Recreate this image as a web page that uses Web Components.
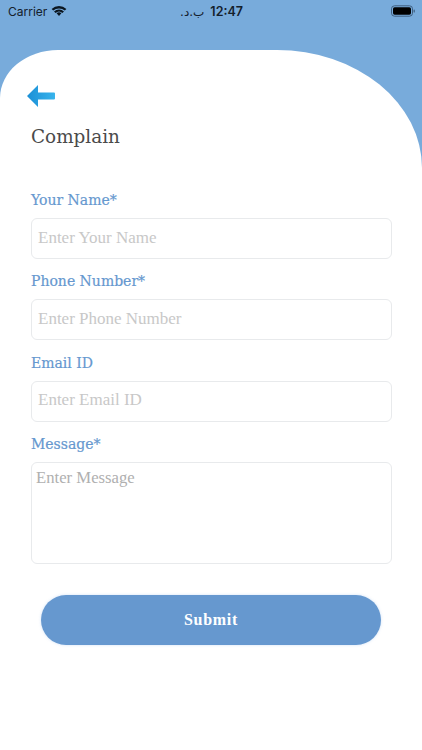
<!DOCTYPE html>
<html>
<head>
<meta charset="utf-8">
<title>Complain</title>
<style>
  html, body { margin: 0; padding: 0; background: #fff; }
</style>
</head>
<body>

<complain-screen>
  <status-bar slot="top"></status-bar>
  <back-arrow></back-arrow>
  <page-title>Complain</page-title>
  <form-field label="Your Name*">Enter Your Name</form-field>
  <form-field label="Phone Number*">Enter Phone Number</form-field>
  <form-field label="Email ID">Enter Email ID</form-field>
  <form-field label="Message*" multiline>Enter Message</form-field>
  <submit-button>Submit</submit-button>
</complain-screen>

<script>
class ComplainScreen extends HTMLElement {
  constructor() {
    super();
    this.attachShadow({ mode: 'open' });
    this.shadowRoot.innerHTML = `
      <style>
        :host {
          display: flex;
          flex-direction: column;
          width: 422px;
          height: 750px;
          overflow: hidden;
          background: #78abdb;
        }
        .sheet {
          flex: 1;
          display: flex;
          flex-direction: column;
          background: #fff;
          border-radius: 58px 145px 0 0 / 48px 118px 0 0;
          padding: 34px 30.5px 0;
        }
      </style>
      <slot name="top"></slot>
      <div class="sheet"><slot></slot></div>
    `;
  }
}

class StatusBar extends HTMLElement {
  constructor() {
    super();
    this.attachShadow({ mode: 'open' });
    this.shadowRoot.innerHTML = `
      <style>
        :host {
          display: grid;
          grid-template-columns: 1fr auto 1fr;
          align-items: center;
          height: 50px;
          padding: 0 7px 28px 8px;
          box-sizing: border-box;
          font: 12px "Inter", "Liberation Sans", sans-serif;
          color: #14202c;
        }
        .left { display: flex; align-items: center; gap: 4px; }
        .time { font-weight: 600; font-size: 12.5px; }
        .pm { font: 12px "DejaVu Sans", sans-serif; margin-right: 6px; letter-spacing: .4px; }
        .right { justify-self: end; display: flex; }
      </style>
      <div class="left">
        <span>Carrier</span>
        <svg width="16" height="12" viewBox="0 0 16 12">
          <path d="M8 11 L5.6 8.2 A3.7 3.7 0 0 1 10.4 8.2 Z" fill="#0b1620"/>
          <path d="M8 1 A11 11 0 0 0 .6 3.9 L2.2 5.6 A8.7 8.7 0 0 1 13.8 5.6 L15.4 3.9 A11 11 0 0 0 8 1 Z" fill="#0b1620"/>
          <path d="M8 4.4 A7.3 7.3 0 0 0 3 6.4 L4.6 8.1 A5 5 0 0 1 11.4 8.1 L13 6.4 A7.3 7.3 0 0 0 8 4.4 Z" fill="#0b1620"/>
        </svg>
      </div>
      <div><span class="pm" dir="rtl">ب.د.</span><span class="time">12:47</span></div>
      <div class="right">
        <svg width="24" height="12" viewBox="0 0 24 12">
          <rect x=".5" y=".8" width="21" height="10.4" rx="3" fill="none" stroke="#3f5f80"/>
          <rect x="2" y="2.3" width="18" height="7.4" rx="1.6" fill="#000"/>
          <rect x="22.6" y="4.4" width="1.2" height="3.2" rx=".6" fill="#3f5f80"/>
        </svg>
      </div>
    `;
  }
}

class BackArrow extends HTMLElement {
  constructor() {
    super();
    this.attachShadow({ mode: 'open' });
    this.shadowRoot.innerHTML = `
      <style>
        :host { display: block; width: 30px; height: 24px; margin-left: -4.5px; }
        svg { display: block; }
      </style>
      <svg width="30" height="24" viewBox="0 0 30 24">
        <defs>
          <linearGradient id="g" x1="0" x2="1" y1="0" y2="0">
            <stop offset="0" stop-color="#1b8fd6"/>
            <stop offset="1" stop-color="#38b4ec"/>
          </linearGradient>
        </defs>
        <path d="M1 12 L12 1 L12 8.5 L28 8.5 Q29 8.5 29 9.5 L29 14.5 Q29 15.5 28 15.5 L12 15.5 L12 23 Z" fill="url(#g)"/>
      </svg>
    `;
  }
}

class PageTitle extends HTMLElement {
  constructor() {
    super();
    this.attachShadow({ mode: 'open' });
    this.shadowRoot.innerHTML = `
      <style>
        :host {
          display: block;
          margin-top: 17px;
          padding-left: .5px;
          font: 18.4px/24px "DejaVu Serif", serif;
          color: #4a4a4a;
        }
      </style>
      <slot></slot>
    `;
  }
}

class FormField extends HTMLElement {
  constructor() {
    super();
    this.attachShadow({ mode: 'open' });
    this.shadowRoot.innerHTML = `
      <style>
        :host {
          display: block;
          margin-top: 12.25px;
        }
        :host(:first-of-type) { margin-top: 41px; }
        .label {
          padding-left: .5px;
          font: 14px/20px "DejaVu Serif", serif;
          -webkit-text-stroke: .2px #6698cf;
          color: #6698cf;
        }
        .box {
          box-sizing: border-box;
          height: 41px;
          margin-top: 8px;
          padding: 0 6.5px 2px;
          display: flex;
          align-items: center;
          border: 1px solid #e8eaec;
          border-radius: 6px;
          font: 17px "Liberation Serif", serif;
          color: #c8c8c8;
        }
        :host([multiline]) .box {
          height: 102.5px;
          padding: 5px 4.5px;
          align-items: flex-start;
          font-size: 16.7px;
          color: #b0b0b0;
        }
      </style>
      <div class="label"></div>
      <div class="box"><slot></slot></div>
    `;
  }

  connectedCallback() {
    this.shadowRoot.querySelector('.label').textContent = this.getAttribute('label');
  }
}

class SubmitButton extends HTMLElement {
  constructor() {
    super();
    this.attachShadow({ mode: 'open' });
    this.shadowRoot.innerHTML = `
      <style>
        :host {
          display: flex;
          align-items: center;
          justify-content: center;
          box-sizing: border-box;
          width: 340px;
          height: 50px;
          margin: 30.75px 0 0 10.5px;
          padding-bottom: 1px;
          border-radius: 25px;
          background: #6698cf;
          box-shadow: 0 0 3px rgba(120,170,230,.35);
          font: bold 16px "Liberation Serif", serif;
          letter-spacing: .7px;
          color: #fff;
        }
      </style>
      <slot></slot>
    `;
  }
}

customElements.define('complain-screen', ComplainScreen);
customElements.define('status-bar', StatusBar);
customElements.define('back-arrow', BackArrow);
customElements.define('page-title', PageTitle);
customElements.define('form-field', FormField);
customElements.define('submit-button', SubmitButton);
</script>
</body>
</html>
